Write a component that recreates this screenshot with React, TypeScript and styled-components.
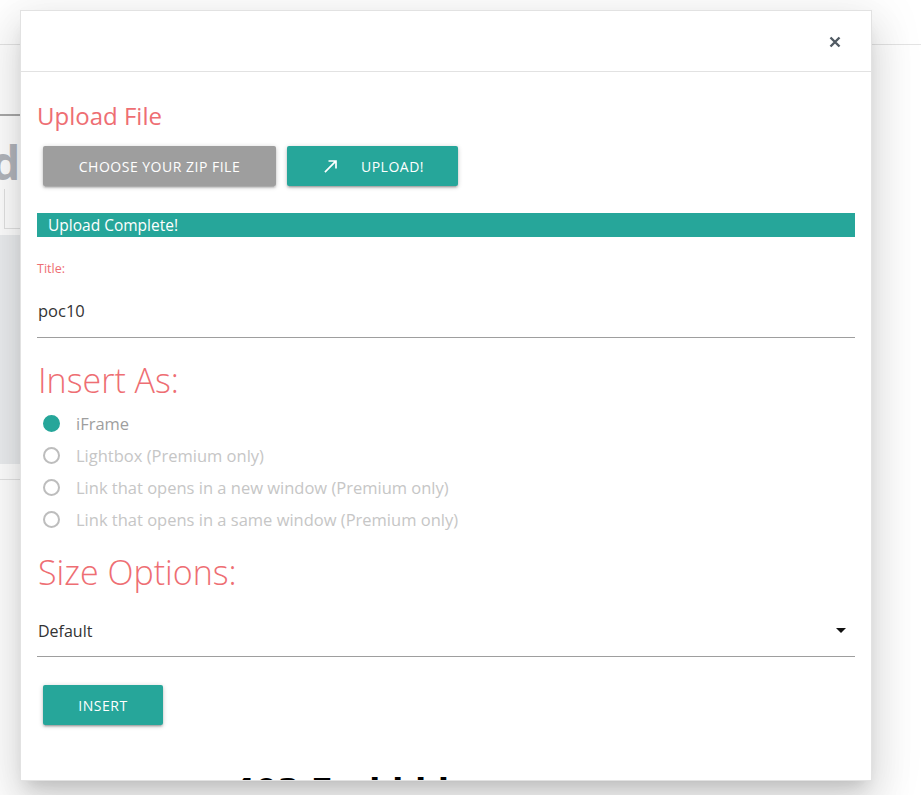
import React, { useState } from 'react';
import styled, { createGlobalStyle } from 'styled-components';

const GlobalStyle = createGlobalStyle`
  html, body {
    margin: 0;
    padding: 0;
    background: #fff;
    font-family: 'Open Sans', 'Noto Sans', sans-serif;
  }
  * {
    box-sizing: border-box;
  }
`;

const teal = '#26a69a';
const coral = '#ee6e73';

// background page that sits behind the modal
const Page = styled.div`
  position: relative;
  height: 100vh;
  overflow: hidden;
`;

const TopBar = styled.div`
  height: 45px;
  border-bottom: 1px solid #e4e4e4;
`;

const TabRule = styled.div`
  margin-top: 69px;
  width: 240px;
  height: 2px;
  background: #a9a9a9;
`;

const PageTitle = styled.h1`
  margin: 21px 0 0 -143px;
  font-size: 46px;
  line-height: 50px;
  font-weight: 700;
  color: #b3b6bc;
`;

const InfoBox = styled.div`
  margin: 2px 0 0 4px;
  height: 40px;
  width: 300px;
  border-left: 1px solid #e2e2e2;
  border-bottom: 1px solid #e2e2e2;
`;

const GreyPanel = styled.div`
  margin-top: 6px;
  width: 420px;
  height: 229px;
  background: #eceef0;
`;

const PageRule = styled.div`
  margin-top: 15px;
  width: 420px;
  border-top: 1px solid #e4e4e4;
`;

// modal
const Modal = styled.div`
  position: absolute;
  top: 10px;
  left: 20px;
  width: 852px;
  height: 771px;
  background: #fff;
  border: 1px solid #e2e2e2;
  overflow: hidden;
  box-shadow: 0 24px 38px 3px rgba(0, 0, 0, 0.1), 0 9px 46px 8px rgba(0, 0, 0, 0.08),
    0 11px 15px -7px rgba(0, 0, 0, 0.14);
`;

const ModalHeader = styled.div`
  height: 61px;
  border-bottom: 1px solid #e2e2e2;
  display: flex;
  align-items: center;
  justify-content: flex-end;
  padding-right: 30px;
  padding-top: 1px;
`;

const CloseButton = styled.button`
  border: none;
  background: none;
  padding: 0;
  width: 12px;
  height: 12px;
  display: flex;
  cursor: pointer;
`;

const ModalBody = styled.div`
  padding: 0 16px 0 16px;
`;

const SectionTitle = styled.h4`
  margin: 29px 0 0;
  font-size: 24px;
  line-height: 30px;
  font-weight: 400;
  color: ${coral};
`;

const ButtonRow = styled.div`
  display: flex;
  gap: 11px;
  margin: 15px 0 0 6px;
`;

const Button = styled.button<{ $tone?: 'grey' | 'teal'; $width: number }>`
  display: flex;
  align-items: center;
  justify-content: center;
  gap: 20px;
  width: ${p => p.$width}px;
  height: 40px;
  border: none;
  border-radius: 2px;
  background: ${p => (p.$tone === 'grey' ? '#9e9e9e' : teal)};
  color: #fff;
  font-family: inherit;
  font-size: 14px;
  letter-spacing: 0.5px;
  text-transform: uppercase;
  cursor: pointer;
  box-shadow: 0 2px 2px 0 rgba(0, 0, 0, 0.14), 0 3px 1px -2px rgba(0, 0, 0, 0.12),
    0 1px 5px 0 rgba(0, 0, 0, 0.2);
`;

const StatusBar = styled.div`
  margin-top: 27px;
  height: 24px;
  background: ${teal};
  color: #fff;
  font-size: 15.5px;
  line-height: 24px;
  padding-left: 11px;
`;

const FieldLabel = styled.label`
  display: block;
  margin-top: 24px;
  font-size: 12.5px;
  line-height: 16px;
  color: ${coral};
`;

const TextInput = styled.input`
  display: block;
  width: 100%;
  margin-top: 12px;
  height: 49px;
  padding: 0 1px 5px;
  border: none;
  border-bottom: 1px solid #9e9e9e;
  outline: none;
  font-family: inherit;
  font-size: 16.5px;
  color: #333;
`;

const BigTitle = styled.h3<{ $top: number }>`
  margin: ${p => p.$top}px 0 0 1px;
  font-size: 34px;
  line-height: 40px;
  font-weight: 300;
  color: ${coral};
`;

const RadioList = styled.div`
  margin-top: 7px;
`;

const RadioRow = styled.label<{ $disabled?: boolean }>`
  display: flex;
  align-items: center;
  height: 32px;
  padding-left: 6px;
  gap: 16px;
  font-size: 16.5px;
  color: ${p => (p.$disabled ? '#c6c6c6' : '#9e9e9e')};
  cursor: ${p => (p.$disabled ? 'default' : 'pointer')};
`;

const RadioDot = styled.span<{ $checked?: boolean }>`
  width: 17px;
  height: 17px;
  border-radius: 50%;
  flex: none;
  border: 2px solid ${p => (p.$checked ? teal : '#bdbdbd')};
  background: ${p => (p.$checked ? teal : 'transparent')};
`;

const SelectBox = styled.div`
  margin-top: 17px;
  height: 48px;
  border-bottom: 1px solid #9e9e9e;
  display: flex;
  align-items: center;
  justify-content: space-between;
  padding: 0 9px 4px 1px;
  font-size: 16px;
  color: #333;
  cursor: pointer;
`;

const Caret = styled.span`
  width: 0;
  height: 0;
  border-left: 5px solid transparent;
  border-right: 5px solid transparent;
  border-top: 5px solid #111;
`;

const InsertRow = styled.div`
  margin: 28px 0 0 6px;
`;

const Preview = styled.h1`
  margin: 45px 0 0 196px;
  font-family: 'DejaVu Sans', sans-serif;
  font-size: 32px;
  line-height: 40px;
  font-weight: 700;
  color: #000;
`;

const options = [
  { label: 'iFrame', premium: false },
  { label: 'Lightbox (Premium only)', premium: true },
  { label: 'Link that opens in a new window (Premium only)', premium: true },
  { label: 'Link that opens in a same window (Premium only)', premium: true },
];

const App: React.FC = () => {
  const [title, setTitle] = useState('poc10');
  const [insertAs, setInsertAs] = useState(0);

  return (
    <Page>
      <GlobalStyle />
      <TopBar />
      <TabRule />
      <PageTitle>Upload</PageTitle>
      <InfoBox />
      <GreyPanel />
      <PageRule />

      <Modal>
        <ModalHeader>
          <CloseButton aria-label="close">
            <svg width="12" height="12" viewBox="0 0 12 12">
              <path d="M1.5 1.5l9 9M10.5 1.5l-9 9" stroke="#515a63" strokeWidth="2.4" />
            </svg>
          </CloseButton>
        </ModalHeader>
        <ModalBody>
          <SectionTitle>Upload File</SectionTitle>
          <ButtonRow>
            <Button $tone="grey" $width={233}>Choose your zip file</Button>
            <Button $tone="teal" $width={171}>
              <svg width="20" height="20" viewBox="0 0 24 24">
                <path d="M9 5v2h6.59L4 18.59 5.41 20 17 8.41V15h2V5z" fill="#fff" />
              </svg>
              Upload!
            </Button>
          </ButtonRow>
          <StatusBar>Upload Complete!</StatusBar>

          <FieldLabel>Title:</FieldLabel>
          <TextInput value={title} onChange={e => setTitle(e.target.value)} />

          <BigTitle $top={22}>Insert As:</BigTitle>
          <RadioList>
            {options.map((o, i) => (
              <RadioRow
                key={o.label}
                $disabled={o.premium}
                onClick={() => !o.premium && setInsertAs(i)}
              >
                <RadioDot $checked={insertAs === i} />
                {o.label}
              </RadioRow>
            ))}
          </RadioList>

          <BigTitle $top={17}>Size Options:</BigTitle>
          <SelectBox>
            Default
            <Caret />
          </SelectBox>

          <InsertRow>
            <Button $tone="teal" $width={120}>Insert</Button>
          </InsertRow>
          <Preview>403 Forbidden</Preview>
        </ModalBody>
      </Modal>
    </Page>
  );
};

export default App;
